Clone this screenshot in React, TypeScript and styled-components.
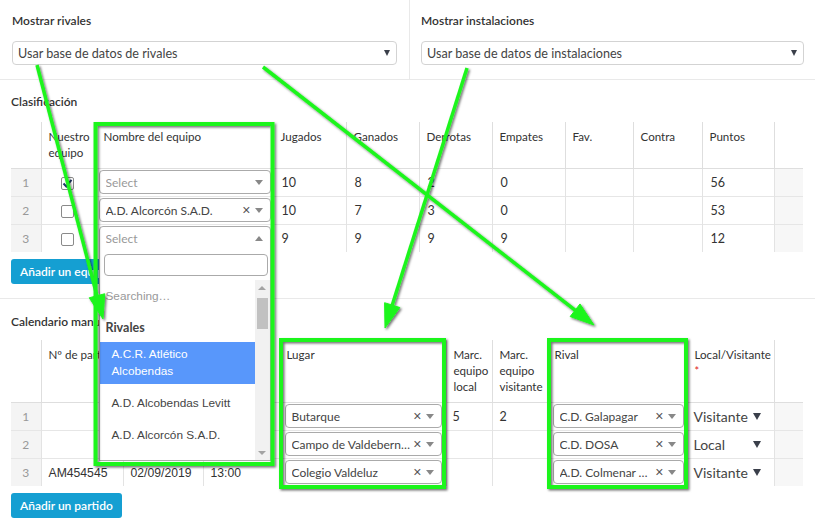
import styled, { createGlobalStyle } from "styled-components";

const GlobalStyle = createGlobalStyle`
  html, body { margin: 0; padding: 0; background: #fff; }
  body { font-family: Lato, "Open Sans", "Liberation Sans", sans-serif; color: #333; }
  * { box-sizing: border-box; }
`;

const Page = styled.div`
  position: relative;
  width: 815px;
  height: 524px;
  overflow: hidden;
  background: #fff;
`;

/* ---------- filtros superiores ---------- */

const FilterBar = styled.div`
  display: grid;
  grid-template-columns: 409px 1fr;
  height: 80px;
  border-bottom: 1px solid #e9e9e9;
`;

const FilterCol = styled.div<{ $divided?: boolean }>`
  padding: 13px ${(p) => (p.$divided ? "11px" : "12px")} 0;
  border-left: ${(p) => (p.$divided ? "1px solid #e9e9e9" : "none")};
`;

const FieldLabel = styled.div`
  font-size: 12px;
  font-weight: 600;
  line-height: 16px;
  color: #333;
  margin-bottom: 12px;
`;

const TopSelect = styled.div`
  height: 24px;
  border: 1px solid #d3d3d3;
  border-radius: 4px;
  display: flex;
  align-items: center;
  padding: 0 6px 0 5px;
  font-size: 12.6px;
  color: #444;
`;

const TopSelectText = styled.span`
  flex: 1;
`;

const SolidCaret = styled.span<{ $size?: number }>`
  width: 0;
  height: 0;
  flex: none;
  border-left: ${(p) => (p.$size ?? 7) / 2}px solid transparent;
  border-right: ${(p) => (p.$size ?? 7) / 2}px solid transparent;
  border-top: ${(p) => Math.round((p.$size ?? 7) * 0.85)}px solid #3a3f4a;
`;

/* ---------- secciones ---------- */

const Section = styled.section<{ $divided?: boolean }>`
  padding: ${(p) => (p.$divided ? "14px 11px 14px" : "15px 11px 0")};
  border-bottom: ${(p) => (p.$divided ? "1px solid #e9e9e9" : "none")};
`;

const SectionTitle = styled.div<{ $gap: number }>`
  font-size: 12px;
  font-weight: 600;
  line-height: 16px;
  color: #333;
  margin-bottom: ${(p) => p.$gap}px;
`;

const Grid = styled.table`
  border-collapse: collapse;
  table-layout: fixed;
  width: 792px;
`;

const HeadCell = styled.th<{ $h: number; $first?: boolean }>`
  height: ${(p) => p.$h}px;
  padding: 7px 2px 0 7px;
  vertical-align: top;
  text-align: left;
  font-size: 11.6px;
  font-weight: 400;
  line-height: 16px;
  color: #333;
  white-space: nowrap;
  overflow: hidden;
  border-left: ${(p) => (p.$first ? "none" : "1px solid #dedede")};
  border-bottom: 1px solid #dedede;
`;

const Cell = styled.td<{ $pad?: string }>`
  height: 28px;
  padding: ${(p) => p.$pad ?? "0 8px"};
  vertical-align: middle;
  font-size: 12.5px;
  color: #333;
  border-left: 1px solid #e3e3e3;
  border-top: 1px solid #e6e6e6;
  white-space: nowrap;
  overflow: visible;
`;

const IndexCell = styled.td`
  height: 28px;
  padding: 0;
  text-align: center;
  font-size: 12px;
  color: #999;
  background: #f4f4f4;
  border-top: 1px solid #e6e6e6;
`;

const FillerCell = styled.td`
  background: #f7f7f7;
  border-left: 1px solid #e3e3e3;
  border-top: 1px solid #e6e6e6;
`;

const PlainText = styled.span`
  font-family: "Liberation Sans", Arial, sans-serif;
  font-size: 12.2px;
  color: #333;
`;

const Required = styled.span`
  color: #e02020;
  font-size: 11px;
`;

const Check = styled.span`
  display: inline-flex;
  width: 13px;
  height: 13px;
  margin-left: 11px;
  border: 1px solid #8a8a8a;
  border-radius: 2px;
  background: #fff;
  vertical-align: middle;
  align-items: center;
  justify-content: center;
`;

const AddButton = styled.button`
  display: block;
  height: 25px;
  margin-top: 7px;
  padding: 0 9px;
  border: none;
  border-radius: 3px;
  background: #159fd2;
  color: #fff;
  font-family: Lato, sans-serif;
  font-size: 12px;
  font-weight: 600;
`;

/* ---------- select2 ---------- */

const Combo = styled.div<{ $open?: boolean }>`
  position: relative;
  height: 24px;
  display: flex;
  align-items: center;
  padding-left: 6px;
  border: 1px solid #aaa;
  border-radius: ${(p) => (p.$open ? "4px 4px 0 0" : "4px")};
  background: #fff;
  font-size: 12px;
  color: #444;
`;

const ComboValue = styled.span<{ $placeholder?: boolean }>`
  flex: 1;
  min-width: 0;
  overflow: hidden;
  text-overflow: ellipsis;
  white-space: nowrap;
  color: ${(p) => (p.$placeholder ? "#999" : "#444")};
`;

const ComboClear = styled.span`
  font-family: "Liberation Sans", Arial, sans-serif;
  font-size: 14px;
  color: #555;
  margin: 0 4px 0 1px;
`;

const ComboArrow = styled.span<{ $up?: boolean }>`
  width: 0;
  height: 0;
  flex: none;
  margin-right: 7px;
  border-left: 4px solid transparent;
  border-right: 4px solid transparent;
  ${(p) =>
    p.$up ? "border-bottom: 5px solid #888;" : "border-top: 5px solid #888;"}
`;

const Drop = styled.div`
  position: absolute;
  z-index: 5;
  top: 22px;
  left: -1px;
  right: -1px;
  height: 212px;
  background: #fff;
  border: 1px solid #aaa;
  border-top: none;
  display: flex;
  flex-direction: column;
`;

const SearchBox = styled.div`
  padding: 5px 2px 4px 4px;
`;

const SearchInput = styled.div`
  height: 22px;
  border: 1px solid #aaa;
  border-radius: 4px;
`;

const Results = styled.div`
  flex: 1;
  display: flex;
  min-height: 0;
  font-family: "Liberation Sans", Arial, sans-serif;
  font-size: 11.8px;
`;

const ResultList = styled.div`
  flex: 1;
  min-width: 0;
  overflow: hidden;
`;

const Searching = styled.div`
  padding: 8px 6px 4px;
  line-height: 17px;
  color: #999;
`;

const GroupLabel = styled.div`
  padding: 10px 6px 6px;
  line-height: 17px;
  font-family: Lato, sans-serif;
  font-size: 12.5px;
  font-weight: 700;
  color: #444;
`;

const Option = styled.div<{ $active?: boolean }>`
  padding: ${(p) => (p.$active ? "4px 12px" : "11px 12px 4px")};
  line-height: 17px;
  background: ${(p) => (p.$active ? "#5897fb" : "#fff")};
  color: ${(p) => (p.$active ? "#fff" : "#444")};
`;

const Scrollbar = styled.div`
  width: 15px;
  background: #f1f1f1;
  display: flex;
  flex-direction: column;
  align-items: center;
`;

const ScrollButton = styled.span<{ $down?: boolean }>`
  width: 0;
  height: 0;
  margin: ${(p) => (p.$down ? "auto 0 5px" : "6px 0 0")};
  border-left: 4px solid transparent;
  border-right: 4px solid transparent;
  ${(p) =>
    p.$down ? "border-top: 4px solid #a3a3a3;" : "border-bottom: 4px solid #a3a3a3;"}
`;

const ScrollThumb = styled.span`
  width: 11px;
  height: 31px;
  margin-top: 8px;
  background: #c1c1c1;
`;

/* ---------- local / visitante ---------- */

const NativeValue = styled.div`
  display: flex;
  align-items: center;
  justify-content: space-between;
  padding-right: 13px;
  font-size: 14px;
  color: #444;
`;

/* ---------- anotaciones ---------- */

const Annotations = styled.svg`
  position: absolute;
  left: 0;
  top: 0;
  z-index: 10;
  pointer-events: none;
`;

const GREEN = "#1ef51e";

function Arrow({ x1, y1, x2, y2 }: { x1: number; y1: number; x2: number; y2: number }) {
  const dx = x2 - x1;
  const dy = y2 - y1;
  const len = Math.hypot(dx, dy);
  const ux = dx / len;
  const uy = dy / len;
  const L = 24;
  const W = 8;
  const bx = x2 - ux * L;
  const by = y2 - uy * L;
  const pts = [
    [x2, y2],
    [bx - uy * W, by + ux * W],
    [bx + uy * W, by - ux * W],
  ]
    .map((p) => p.join(","))
    .join(" ");
  return (
    <g>
      <line x1={x1} y1={y1} x2={bx + ux * 2} y2={by + uy * 2} stroke={GREEN} strokeWidth={3.5} />
      <polygon points={pts} fill={GREEN} stroke={GREEN} strokeWidth={1} />
    </g>
  );
}

function Select2({
  value,
  clearable,
  open,
  children,
}: {
  value?: string;
  clearable?: boolean;
  open?: boolean;
  children?: React.ReactNode;
}) {
  return (
    <Combo $open={open}>
      <ComboValue $placeholder={!value}>{value ?? "Select"}</ComboValue>
      {clearable && <ComboClear>×</ComboClear>}
      <ComboArrow $up={open} />
      {children}
    </Combo>
  );
}

const standings = [
  { checked: true, team: undefined, j: 10, g: 8, d: 2, e: 0, p: 56 },
  { checked: false, team: "A.D. Alcorcón S.A.D.", j: 10, g: 7, d: 3, e: 0, p: 53 },
  { checked: false, team: undefined, j: 9, g: 9, d: 9, e: 9, p: 12, open: true },
];

const matches = [
  { code: "", date: "", time: "", place: "Butarque", gl: "5", gv: "2", rival: "C.D. Galapagar", side: "Visitante" },
  { code: "", date: "", time: "", place: "Campo de Valdebernardo", gl: "", gv: "", rival: "C.D. DOSA", side: "Local" },
  { code: "AM454545", date: "02/09/2019", time: "13:00", place: "Colegio Valdeluz", gl: "", gv: "", rival: "A.D. Colmenar Viejo", side: "Visitante" },
];

export default function App() {
  return (
    <Page>
      <GlobalStyle />
      <FilterBar>
        <FilterCol>
          <FieldLabel>Mostrar rivales</FieldLabel>
          <TopSelect>
            <TopSelectText>Usar base de datos de rivales</TopSelectText>
            <SolidCaret />
          </TopSelect>
        </FilterCol>
        <FilterCol $divided>
          <FieldLabel>Mostrar instalaciones</FieldLabel>
          <TopSelect>
            <TopSelectText>Usar base de datos de instalaciones</TopSelectText>
            <SolidCaret />
          </TopSelect>
        </FilterCol>
      </FilterBar>

      <Section $divided>
        <SectionTitle $gap={12}>Clasificación</SectionTitle>
        <Grid>
          <colgroup>
            <col style={{ width: 30 }} />
            <col style={{ width: 55 }} />
            <col style={{ width: 177 }} />
            <col style={{ width: 73 }} />
            <col style={{ width: 73 }} />
            <col style={{ width: 73 }} />
            <col style={{ width: 73 }} />
            <col style={{ width: 68 }} />
            <col style={{ width: 69 }} />
            <col style={{ width: 72 }} />
            <col style={{ width: 29 }} />
          </colgroup>
          <thead>
            <tr>
              <HeadCell $h={46} $first />
              <HeadCell $h={46}>
                Nuestro
                <br />
                equipo
              </HeadCell>
              <HeadCell $h={46}>Nombre del equipo</HeadCell>
              <HeadCell $h={46}>Jugados</HeadCell>
              <HeadCell $h={46}>Ganados</HeadCell>
              <HeadCell $h={46}>Derrotas</HeadCell>
              <HeadCell $h={46}>Empates</HeadCell>
              <HeadCell $h={46}>Fav.</HeadCell>
              <HeadCell $h={46}>Contra</HeadCell>
              <HeadCell $h={46}>Puntos</HeadCell>
              <HeadCell $h={46} />
            </tr>
          </thead>
          <tbody>
            {standings.map((r, i) => (
              <tr key={i}>
                <IndexCell>{i + 1}</IndexCell>
                <Cell $pad="0 0 0 8px">
                  <Check>
                    {r.checked && (
                      <svg width="11" height="11" viewBox="0 0 11 11">
                        <path d="M1.5 5.5 L4.3 8.5 L9.5 1.8" fill="none" stroke="#1f3a66" strokeWidth="2" />
                      </svg>
                    )}
                  </Check>
                </Cell>
                <Cell $pad="0 2px 0 2px">
                  <Select2 value={r.team} clearable={!!r.team} open={r.open}>
                    {r.open && (
                      <Drop>
                        <SearchBox>
                          <SearchInput />
                        </SearchBox>
                        <Results>
                          <ResultList>
                            <Searching>Searching…</Searching>
                            <GroupLabel>Rivales</GroupLabel>
                            <Option $active>
                              A.C.R. Atlético
                              <br />
                              Alcobendas
                            </Option>
                            <Option>A.D. Alcobendas Levitt</Option>
                            <Option>A.D. Alcorcón S.A.D.</Option>
                            <Option>A.D. Colmenar Viejo</Option>
                          </ResultList>
                          <Scrollbar>
                            <ScrollButton />
                            <ScrollThumb />
                            <ScrollButton $down />
                          </Scrollbar>
                        </Results>
                      </Drop>
                    )}
                  </Select2>
                </Cell>
                <Cell>{r.j}</Cell>
                <Cell>{r.g}</Cell>
                <Cell>{r.d}</Cell>
                <Cell>{r.e}</Cell>
                <Cell />
                <Cell />
                <Cell>{r.p}</Cell>
                <FillerCell />
              </tr>
            ))}
          </tbody>
        </Grid>
        <AddButton>Añadir un equipo</AddButton>
      </Section>

      <Section>
        <SectionTitle $gap={10}>Calendario manual</SectionTitle>
        <Grid>
          <colgroup>
            <col style={{ width: 30 }} />
            <col style={{ width: 82 }} />
            <col style={{ width: 80 }} />
            <col style={{ width: 76 }} />
            <col style={{ width: 167 }} />
            <col style={{ width: 46 }} />
            <col style={{ width: 55 }} />
            <col style={{ width: 140 }} />
            <col style={{ width: 87 }} />
            <col style={{ width: 29 }} />
          </colgroup>
          <thead>
            <tr>
              <HeadCell $h={62} $first />
              <HeadCell $h={62}>Nº de partido</HeadCell>
              <HeadCell $h={62}>Fecha</HeadCell>
              <HeadCell $h={62}>Hora</HeadCell>
              <HeadCell $h={62}>Lugar</HeadCell>
              <HeadCell $h={62}>
                Marc.
                <br />
                equipo
                <br />
                local
              </HeadCell>
              <HeadCell $h={62}>
                Marc.
                <br />
                equipo
                <br />
                visitante
              </HeadCell>
              <HeadCell $h={62}>Rival</HeadCell>
              <HeadCell $h={62}>
                Local/Visitante
                <br />
                <Required>*</Required>
              </HeadCell>
              <HeadCell $h={62} />
            </tr>
          </thead>
          <tbody>
            {matches.map((m, i) => (
              <tr key={i}>
                <IndexCell>{i + 1}</IndexCell>
                <Cell $pad="0 7px">
                  <PlainText>{m.code}</PlainText>
                </Cell>
                <Cell $pad="0 7px">
                  <PlainText>{m.date}</PlainText>
                </Cell>
                <Cell $pad="0 7px">
                  <PlainText>{m.time}</PlainText>
                </Cell>
                <Cell $pad="0 4px 0 5px">
                  <Select2 value={m.place} clearable />
                </Cell>
                <Cell $pad="0 6px">{m.gl}</Cell>
                <Cell $pad="0 7px">{m.gv}</Cell>
                <Cell $pad="0 3px 0 5px">
                  <Select2 value={m.rival} clearable />
                </Cell>
                <Cell $pad="0 0 0 6px">
                  <NativeValue>
                    {m.side}
                    <SolidCaret $size={8} />
                  </NativeValue>
                </Cell>
                <FillerCell />
              </tr>
            ))}
          </tbody>
        </Grid>
        <AddButton>Añadir un partido</AddButton>
      </Section>

      <Annotations width={815} height={524} viewBox="0 0 815 524">
        <defs>
          <filter id="shade" x="-10%" y="-10%" width="120%" height="120%">
            <feDropShadow dx="1.5" dy="1.5" stdDeviation="1.3" floodColor="#000" floodOpacity="0.55" />
          </filter>
        </defs>
        <g filter="url(#shade)">
          <rect x={95.5} y={124} width={177} height={340} fill="none" stroke={GREEN} strokeWidth={4} />
          <rect x={281} y={340} width={163} height={147} fill="none" stroke={GREEN} strokeWidth={4} />
          <rect x={549} y={340} width={137} height={147} fill="none" stroke={GREEN} strokeWidth={4} />
          <Arrow x1={37} y1={65} x2={103} y2={319} />
          <Arrow x1={263} y1={67} x2={594} y2={325} />
          <Arrow x1={467} y1={68} x2={385} y2={328} />
        </g>
      </Annotations>
    </Page>
  );
}
